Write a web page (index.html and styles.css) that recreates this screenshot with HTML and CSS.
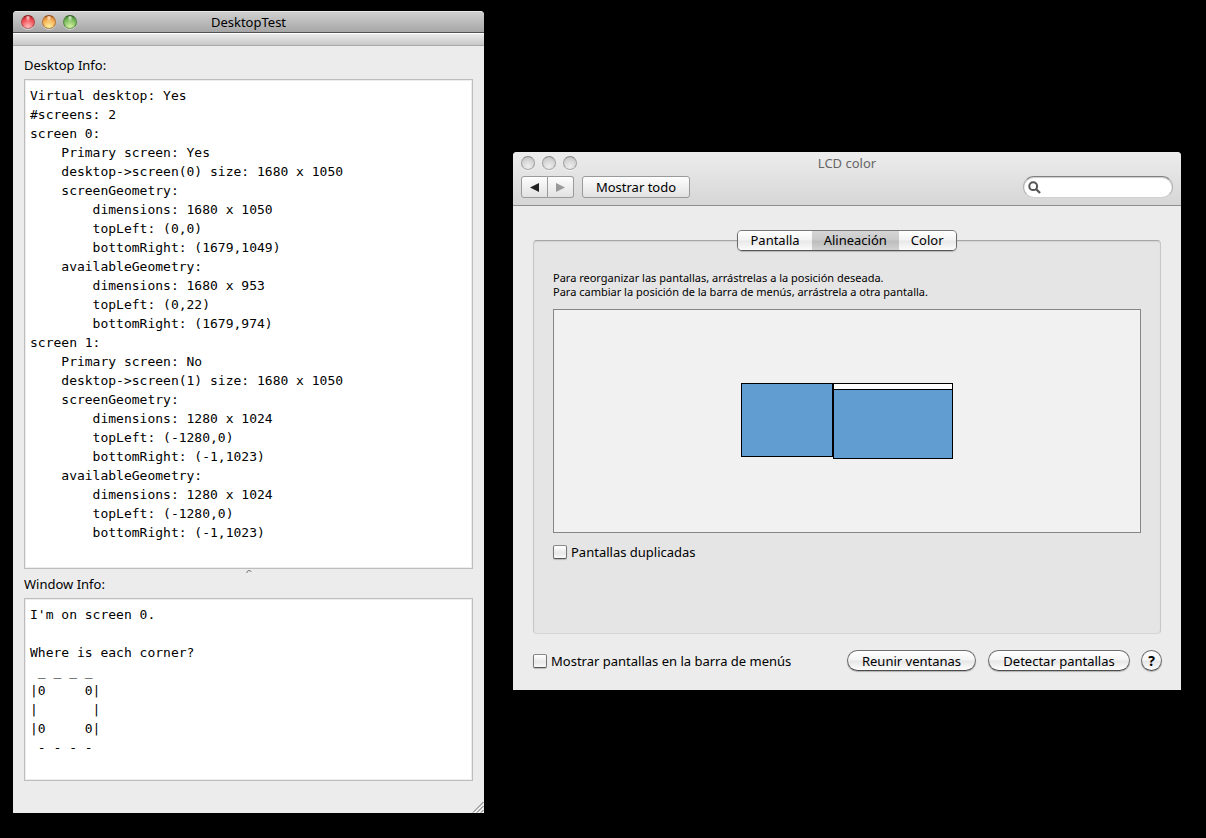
FILE: index.html
```html
<!DOCTYPE html>
<html lang="es">
<head>
<meta charset="utf-8">
<title>DesktopTest</title>
<link rel="stylesheet" href="styles.css">
</head>
<body>
<main class="desktop">
  <section class="window window-test" aria-label="DesktopTest">
    <header class="titlebar">
      <div class="lights">
        <button class="light light-red" aria-label="Close"></button>
        <button class="light light-yellow" aria-label="Minimize"></button>
        <button class="light light-green" aria-label="Zoom"></button>
      </div>
      <h1 class="title">DesktopTest</h1>
    </header>
    <div class="toolstrip"></div>
    <div class="test-body">
      <label class="label" for="desktop-info">Desktop Info:</label>
      <textarea class="info info-desktop" id="desktop-info" readonly spellcheck="false">Virtual desktop: Yes
#screens: 2
screen 0:
    Primary screen: Yes
    desktop-&gt;screen(0) size: 1680 x 1050
    screenGeometry:
        dimensions: 1680 x 1050
        topLeft: (0,0)
        bottomRight: (1679,1049)
    availableGeometry:
        dimensions: 1680 x 953
        topLeft: (0,22)
        bottomRight: (1679,974)
screen 1:
    Primary screen: No
    desktop-&gt;screen(1) size: 1680 x 1050
    screenGeometry:
        dimensions: 1280 x 1024
        topLeft: (-1280,0)
        bottomRight: (-1,1023)
    availableGeometry:
        dimensions: 1280 x 1024
        topLeft: (-1280,0)
        bottomRight: (-1,1023)</textarea>
      <div class="splitter">
        <svg width="6" height="5" viewBox="0 0 6 5" aria-hidden="true"><path d="M.7 4Q1 1.600 3 1.500 4.800 1.500 5.300 3" fill="none" stroke="#777"/></svg>
      </div>
      <label class="label" for="window-info">Window Info:</label>
      <textarea class="info info-window" id="window-info" readonly spellcheck="false">I'm on screen 0.

Where is each corner?
 _ _ _ _
|0     0|
|       |
|0     0|
 - - - -</textarea>
    </div>
    <svg class="grip" width="12" height="12" viewBox="0 0 12 12" aria-hidden="true"><path d="M1 11.5L11.5 1M5 11.5L11.5 5M9 11.5L11.5 9" fill="none" stroke="#666"/><path d="M2 12.3L12.3 2M6 12.3L12.3 6" fill="none" stroke="#fff" stroke-width=".6"/></svg>
  </section>

  <section class="window window-prefs" aria-label="LCD color">
    <header class="unified">
      <div class="titlerow">
        <div class="lights">
          <button class="light light-off" aria-label="Cerrar"></button>
          <button class="light light-off" aria-label="Minimizar"></button>
          <button class="light light-off" aria-label="Ampliar"></button>
        </div>
        <h1 class="title title-off">LCD color</h1>
      </div>
      <div class="toolrow">
        <div class="nav">
          <button class="toolbtn" aria-label="Atrás"><svg width="9" height="9" viewBox="0 0 9 9"><path d="M9 0v9L0 4.500z" fill="#222"/></svg></button>
          <button class="toolbtn" aria-label="Adelante" disabled><svg width="9" height="9" viewBox="0 0 9 9"><path d="M0 0v9l9-4.500z" fill="#999"/></svg></button>
        </div>
        <button class="toolbtn toolbtn-all">Mostrar todo</button>
        <label class="search">
          <svg width="13" height="13" viewBox="0 0 13 13" aria-hidden="true"><circle cx="5.200" cy="5.200" r="3.900" fill="none" stroke="#555" stroke-width="2"/><path d="M8 8l4 4" stroke="#555" stroke-width="2.300"/></svg>
          <input type="text" aria-label="Buscar">
        </label>
      </div>
    </header>
    <div class="prefs-body">
      <div class="tabs" role="tablist">
        <button class="tab" role="tab">Pantalla</button>
        <button class="tab tab-on" role="tab" aria-selected="true">Alineación</button>
        <button class="tab" role="tab">Color</button>
      </div>
      <div class="group">
        <p class="hint">Para reorganizar las pantallas, arrástrelas a la posición deseada.<br>Para cambiar la posición de la barra de menús, arrástrela a otra pantalla.</p>
        <div class="arrange">
          <div class="screen screen-side"></div>
          <div class="screen screen-main"><div class="menubar"></div></div>
        </div>
        <label class="check"><input type="checkbox">Pantallas duplicadas</label>
      </div>
      <footer class="footer">
        <label class="check"><input type="checkbox">Mostrar pantallas en la barra de menús</label>
        <button class="pill pill-first">Reunir ventanas</button>
        <button class="pill">Detectar pantallas</button>
        <button class="help" aria-label="Ayuda">?</button>
      </footer>
    </div>
  </section>
</main>
</body>
</html>
```
FILE: styles.css
```css
* { box-sizing: border-box; }

body {
  margin: 0;
  background: #000;
  color: #000;
  font: 13px/18px "Noto Sans", "Open Sans", sans-serif;
}

button, input { font: inherit; color: inherit; }
button { padding: 0; margin: 0; }

.desktop {
  display: grid;
  grid-template-columns: 471fr 668fr;
  column-gap: 29px;
  min-height: 100vh;
  padding: 11px 25px 25px 13px;
}

.window {
  position: relative;
  display: flex;
  flex-direction: column;
  background: #ececec;
  border-radius: 4px 4px 0 0;
  overflow: hidden;
}

.titlebar, .titlerow {
  position: relative;
  display: flex;
  align-items: center;
  justify-content: center;
  height: 22px;
}
.titlebar {
  background: linear-gradient(#cfcfcf, #a6a6a6);
  border-top: 1px solid #e6e6e6;
  border-bottom: 1px solid #515151;
}
.title { margin: 0; font-size: 13px; font-weight: 400; line-height: 18px; }
.title-off { color: #666; }

.lights { position: absolute; left: 8px; top: 3px; display: flex; gap: 7px; }
.light {
  width: 14px;
  height: 14px;
  border: 1px solid;
  border-radius: 50%;
  box-shadow: 0 1px 0 rgba(255, 255, 255, .5);
}
.light-red {
  border-color: #85201f #b04a4a #b97572;
  background: radial-gradient(ellipse at 50% 12%, #fbd0d0 0, transparent 30%), radial-gradient(circle at 50% 90%, #ffc0c0 0, #f2565a 55%, #b3181c 100%);
}
.light-yellow {
  border-color: #8f4a18 #b67838 #ad8b50;
  background: radial-gradient(ellipse at 50% 12%, #fde6cc 0, transparent 30%), radial-gradient(circle at 50% 90%, #fff3a0 0, #f6b45a 55%, #c9641c 100%);
}
.light-green {
  border-color: #2f5d22 #528a40 #7a9c62;
  background: radial-gradient(ellipse at 50% 12%, #dcefd0 0, transparent 30%), radial-gradient(circle at 50% 90%, #d8f5a4 0, #83c063 55%, #3a7d2c 100%);
}
.light-off {
  border-color: #8a8a8a #a0a0a0 #aaa;
  background: radial-gradient(circle at 50% 80%, #eee 0, #d8d8d8 50%, #bcbcbc 100%);
}

.toolstrip {
  height: 13px;
  background: linear-gradient(#eaeaea, #c8c8c8);
  border-top: 1px solid #fff;
  border-bottom: 1px solid #a9a9a9;
}

.test-body {
  flex: 1;
  display: flex;
  flex-direction: column;
  padding: 10px 11px 32px;
}
.label { margin-bottom: 5px; }
.info {
  display: block;
  width: 100%;
  margin: 0;
  padding: 6px 5px;
  border: 1px solid #bdbdbd;
  border-radius: 0;
  outline: 0;
  resize: none;
  overflow: hidden;
  background: #fff;
  box-shadow: inset 0 0 0 1px #ededed;
  color: #000;
  font: 13px/19px "DejaVu Sans Mono", monospace;
  white-space: pre;
}
.info-desktop { flex: 1 0 472px; }
.info-window { flex: none; height: 183px; }
.splitter { display: flex; justify-content: center; height: 6px; }
.grip { position: absolute; right: 0; bottom: 0; }

.window-prefs { align-self: start; margin-top: 141px; }
.unified {
  background: linear-gradient(#ededed, #d6d6d6);
  border-bottom: 1px solid #8f8f8f;
}
.titlerow .lights { top: 4px; }
.toolrow { display: flex; align-items: center; padding: 2px 8px 7px; }
.nav { display: flex; margin-right: 8px; }
.toolbtn {
  display: flex;
  align-items: center;
  justify-content: center;
  width: 27px;
  height: 22px;
  border: 1px solid #9a9a9a;
  border-radius: 3px;
  background: linear-gradient(#fdfdfd, #e2e2e2);
}
.nav .toolbtn:first-child { border-radius: 3px 0 0 3px; }
.nav .toolbtn:last-child { border-left: 0; border-radius: 0 3px 3px 0; width: 26px; }
.toolbtn-all { width: 108px; }
.search {
  display: flex;
  align-items: center;
  width: 150px;
  height: 22px;
  margin-left: auto;
  padding: 0 4px;
  border: 1px solid;
  border-color: #808080 #b0b0b0 #d0d0d0;
  border-radius: 11px;
  background: #fff;
  box-shadow: inset 0 1px 1px #ccc;
}
.search svg { flex: none; }
.search input { flex: 1; min-width: 0; border: 0; outline: 0; background: none; }

.prefs-body { padding: 24px 20px 19px; }
.tabs {
  position: relative;
  display: flex;
  width: fit-content;
  height: 21px;
  margin: 0 auto -11px;
  border: 1px solid;
  border-color: #777 #6a6a6a #555;
  border-radius: 5px;
  overflow: hidden;
  box-shadow: 0 1px 1px rgba(0, 0, 0, .2);
}
.tab {
  padding: 0 12px 1px;
  border: 0;
  line-height: 16px;
  background: linear-gradient(#fff, #f3f3f3 48%, #e8e8e8 52%, #fbfbfb);
}
.tab-on {
  background: linear-gradient(#d6d6d6, #c9c9c9 48%, #bcbcbc 52%, #d2d2d2);
}
.group {
  padding: 30px 19px 72px;
  border: 1px solid;
  border-color: #a6a6a6 #c6c6c6 #d6d6d6;
  border-radius: 4px;
  background: #e5e5e5;
  box-shadow: inset 0 1px 1px #d4d4d4;
}
.hint { margin: 0 0 10px; font-size: 11px; line-height: 14px; }
.arrange {
  display: flex;
  align-items: flex-start;
  justify-content: center;
  height: 224px;
  padding-top: 73px;
  border: 1px solid #868686;
  background: #f1f1f1;
}
.screen { border: 1px solid #000; background: #629dd1; }
.screen-side { width: 92px; height: 74px; }
.screen-main { width: 120px; height: 76px; }
.menubar { height: 6px; border-bottom: 1px solid #000; background: #fff; }

.check { display: flex; align-items: center; gap: 4px; }
.group .check { margin-top: 10px; }
.check input {
  appearance: none;
  width: 14px;
  height: 14px;
  margin: 0;
  border: 1px solid;
  border-color: #8a8a8a #777 #555;
  border-radius: 2px;
  background: linear-gradient(#fff, #e8e8e8 60%, #fafafa);
  box-shadow: 0 1px 1px rgba(0, 0, 0, .2);
}
.footer { display: flex; align-items: center; gap: 12px; margin-top: 16px; }
.pill, .help {
  height: 21px;
  border: 1px solid;
  border-color: #707070 #6a6a6a #4c4c4c;
  border-radius: 11px;
  background: linear-gradient(#fff, #f4f4f4 48%, #e6e6e6 52%, #fdfdfd);
  box-shadow: 0 1px 1px rgba(0, 0, 0, .25);
  line-height: 18px;
}
.pill { width: 142px; }
.pill-first { width: 129px; margin-left: auto; }
.help { width: 21px; margin: 0 -1px; font-size: 14px; font-weight: 700; }
```
